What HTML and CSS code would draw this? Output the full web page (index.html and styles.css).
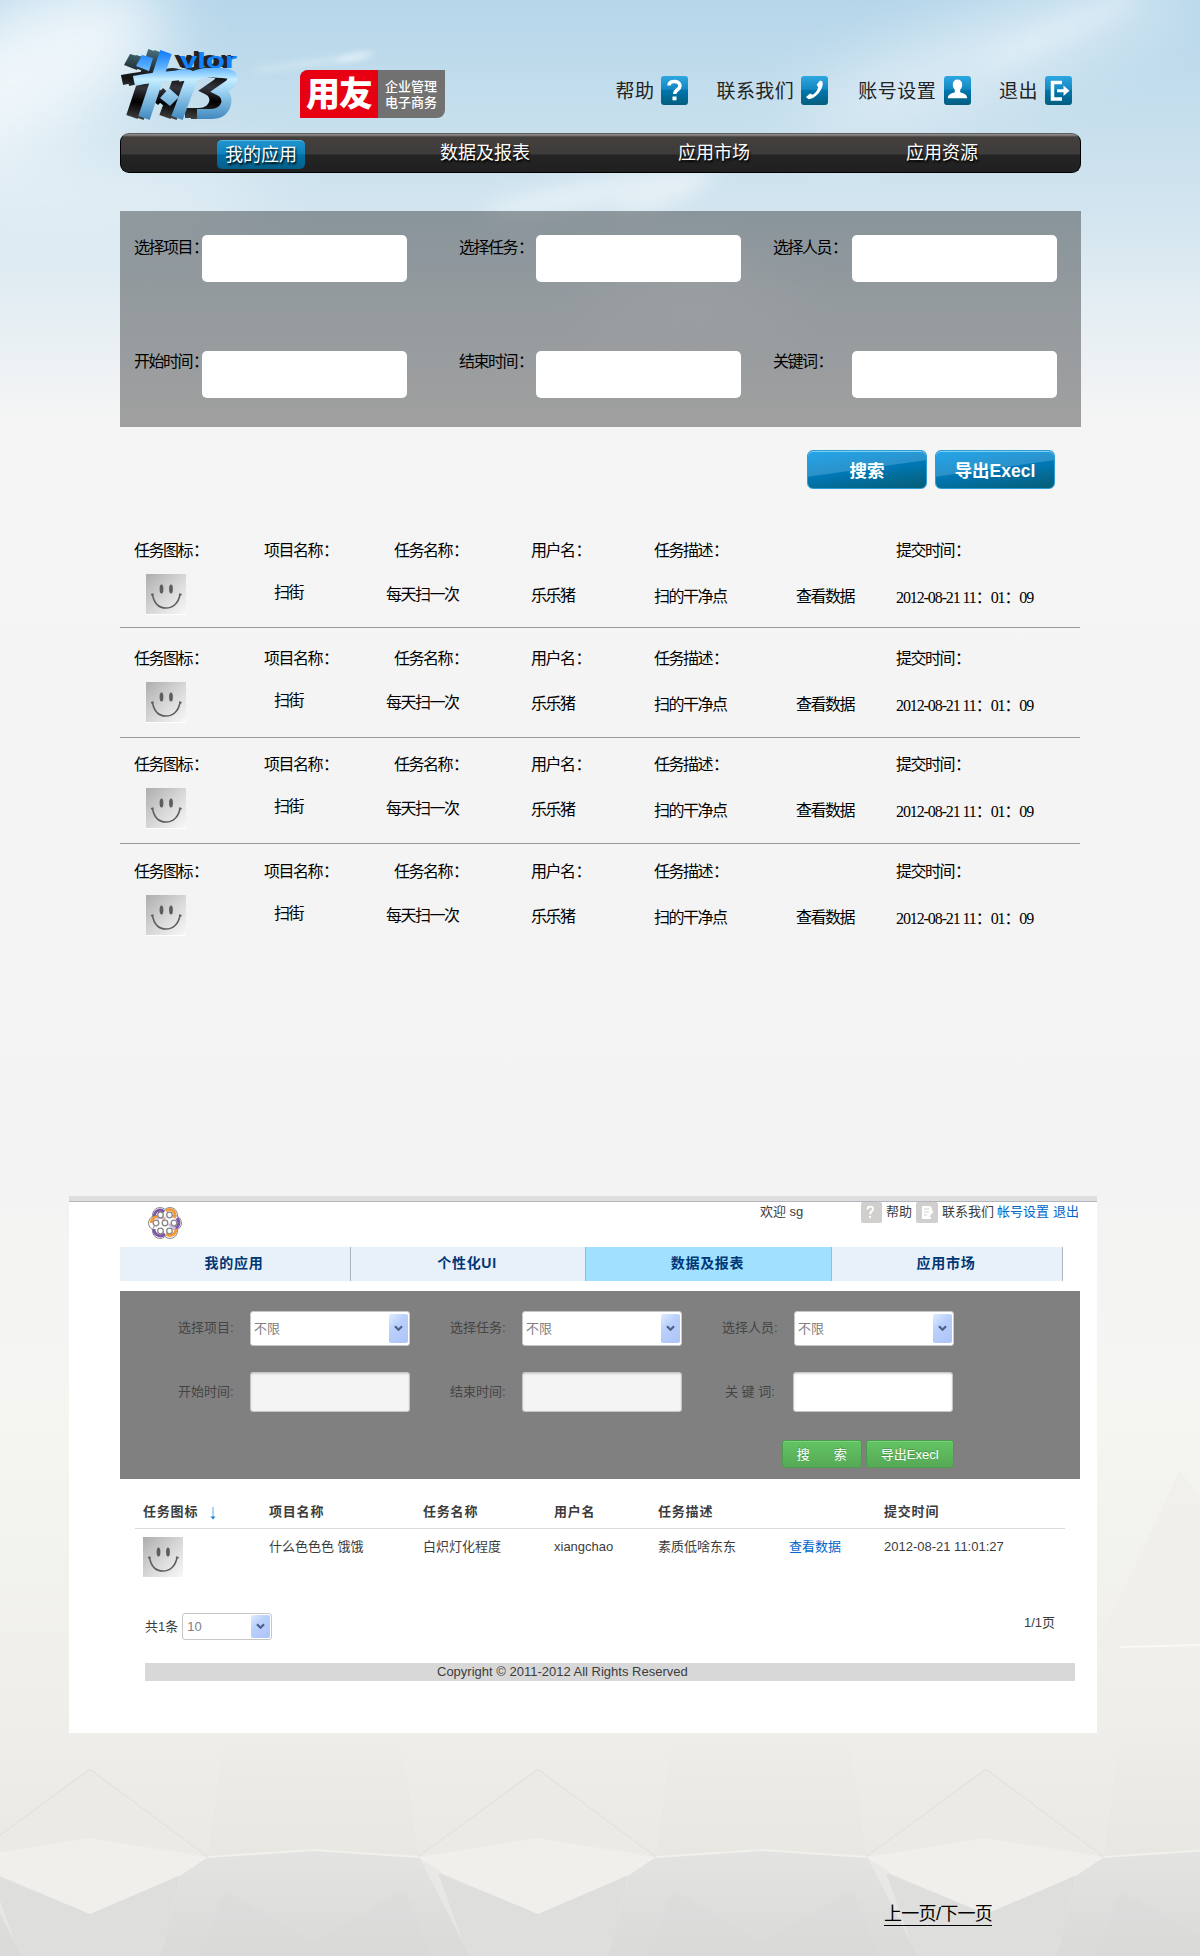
FILE: index.html
```html
<!DOCTYPE html>
<html lang="zh-CN">
<head>
<meta charset="utf-8">
<title>数据及报表</title>
<link rel="stylesheet" href="styles.css">
</head>
<body>
<svg width="0" height="0" class="defs" aria-hidden="true">
  <defs>
    <linearGradient id="faceBg" x1="0" y1="0" x2="1" y2="1"><stop offset="0" stop-color="#adadad"/><stop offset=".5" stop-color="#d6d6d6"/><stop offset="1" stop-color="#f8f8f8"/></linearGradient>
    <linearGradient id="icoBg" x1="0" y1="0" x2="0" y2="1"><stop offset="0" stop-color="#2ea7e0"/><stop offset=".45" stop-color="#1488c2"/><stop offset=".5" stop-color="#0075ae"/><stop offset="1" stop-color="#045d7e"/></linearGradient>
    <linearGradient id="mark" gradientUnits="userSpaceOnUse" x1="0" y1="0" x2="0" y2="70"><stop offset="0" stop-color="#0b78ff"/><stop offset=".25" stop-color="#5eb2ff"/><stop offset=".42" stop-color="#c5edff"/><stop offset=".6" stop-color="#9ad0f0"/><stop offset="1" stop-color="#3f86bd"/></linearGradient>
    <linearGradient id="markSide" gradientUnits="userSpaceOnUse" x1="0" y1="0" x2="0" y2="70"><stop offset="0" stop-color="#48717f"/><stop offset=".4" stop-color="#111"/><stop offset=".55" stop-color="#34343c"/><stop offset=".75" stop-color="#000"/><stop offset="1" stop-color="#444"/></linearGradient>
    <symbol id="face" viewBox="0 0 40 41">
      <rect width="40" height="41" fill="#fff"/><rect width="40" height="40" fill="url(#faceBg)"/>
      <ellipse cx="15.5" cy="15" rx="1.9" ry="4.5" fill="#5d5d5d"/><ellipse cx="25" cy="15" rx="1.9" ry="4.5" fill="#5d5d5d"/>
      <path d="M6.5 20.5C8 29 13 34 20 34S32.500 29 34 20.500M5 20.800l2.600-.8M33 20l2.600.8" fill="none" stroke="#5d5d5d" stroke-width="1.500"/>
    </symbol>
    <symbol id="tile" viewBox="0 0 27 29"><rect width="27" height="29" rx="3" fill="url(#icoBg)"/></symbol>
    <g id="markShape">
      <path d="M22 5 33 8 29 21 16 16Z" stroke="none"/>
      <path d="M46 2 24 68" stroke-width="12" fill="none"/>
      <path d="M14 31 C32 27 50 26 62 25" stroke-width="10" fill="none"/>
      <path d="M58 26Q74 22 70 33L57 68" stroke-width="12" fill="none"/>
      <path d="M72 27Q84 21 102 23Q118 24 110 34L100 41Q108 45 106 54Q103 64 91 64L77 64" stroke-width="10" fill="none"/>
      <path d="M49 38 59 47 50 56 40 48Z" stroke="none"/>
    </g>
  </defs>
</svg>

<svg class="scene" viewBox="0 0 1200 1956" width="1200" height="1956" aria-hidden="true">
  <defs>
    <linearGradient id="sky" x1="0" y1="0" x2="0" y2="1"><stop offset="0" stop-color="#b5d6ea"/><stop offset=".06" stop-color="#c6dfed"/><stop offset=".11" stop-color="#d3e5ef"/><stop offset=".16" stop-color="#e5eef3"/><stop offset=".215" stop-color="#f5f5f5"/><stop offset=".6" stop-color="#f3f3f3"/><stop offset=".72" stop-color="#f5f5f2"/><stop offset=".88" stop-color="#efeeea"/><stop offset="1" stop-color="#e6e5e1"/></linearGradient>
    <linearGradient id="dark" x1="0" y1="0" x2="0" y2="1"><stop offset="0" stop-color="#e3e4e1"/><stop offset="1" stop-color="#dadad9"/></linearGradient>
    <linearGradient id="tallFace" x1="0" y1="0" x2="0" y2="1"><stop offset="0" stop-color="#e9e8e4" stop-opacity="0"/><stop offset="1" stop-color="#e8e7e2"/></linearGradient>
    <filter id="b40" x="-50%" y="-150%" width="200%" height="400%"><feGaussianBlur stdDeviation="34"/></filter>
    <filter id="b14" x="-50%" y="-200%" width="200%" height="500%"><feGaussianBlur stdDeviation="10"/></filter>
    <filter id="b4" x="-50%" y="-300%" width="200%" height="700%"><feGaussianBlur stdDeviation="3"/></filter>
    <g id="facets">
      <path d="M208 1857 224 1735H400L419 1857 313 1851Z" fill="url(#tallFace)"/>
      <path d="M90 1769 208 1857 90 1838-30 1857Z" fill="#ebeae6"/>
      <path d="M208 1857 313 1850 419 1857 470 1956H160L181 1875Z" fill="url(#dark)"/>
      <path d="M90 1914 181 1873 160 1956H20L-10 1873Z" fill="#dededc"/>
      <path d="M-30 1857 90 1838 208 1857 181 1875 90 1914-2 1875Z" fill="#f0efeb"/>
      <path d="M225 1890 313 1942 405 1890 430 1956H200Z" fill="#d8d8d7" opacity=".25"/>
      <path d="M-30 1857 90 1769 208 1857" fill="none" stroke="#dfded9"/>
      <path d="M208 1857 313 1850 419 1857" fill="none" stroke="#f1f0ed" stroke-width="2"/>
    </g>
  </defs>
  <rect width="1200" height="1956" fill="url(#sky)"/>
  <g fill="#fff">
    <ellipse cx="30" cy="70" rx="150" ry="70" opacity=".75" filter="url(#b40)" transform="rotate(-28 30 70)"/>
    <ellipse cx="60" cy="190" rx="210" ry="40" opacity=".4" filter="url(#b40)"/>
    <ellipse cx="1000" cy="50" rx="210" ry="28" opacity=".6" filter="url(#b40)" transform="rotate(-20 1000 50)"/>
    <ellipse cx="1060" cy="30" rx="90" ry="12" opacity=".25" filter="url(#b14)" transform="rotate(-24 1060 30)"/>
    <ellipse cx="600" cy="192" rx="120" ry="13" opacity=".45" filter="url(#b14)" transform="rotate(-10 600 192)"/>
    <ellipse cx="660" cy="197" rx="50" ry="8" opacity=".45" filter="url(#b14)" transform="rotate(-20 660 197)"/>
    <ellipse cx="310" cy="63" rx="60" ry="2" opacity=".45" filter="url(#b4)" transform="rotate(-8 310 63)"/>
    <ellipse cx="355" cy="57" rx="20" ry="3" opacity=".5" filter="url(#b4)" transform="rotate(-12 355 57)"/>
    <ellipse cx="690" cy="300" rx="100" ry="30" opacity=".5" filter="url(#b40)"/>
  </g>
  <path d="M1097 1647 1180 1470 1200 1500V1646Z" fill="#efeeea" opacity=".7"/>
  <path d="M1120 1647 1200 1645" stroke="#f8f8f5" stroke-width="2"/>
  <use href="#facets" x="-448"/><use href="#facets" x="0"/><use href="#facets" x="448"/><use href="#facets" x="896"/>
</svg>

<div class="page">
  <header class="top">
    <svg class="brand" width="119" height="72" viewBox="0 0 119 72">
      <g transform="translate(-12 -1)" fill="url(#markSide)" stroke="url(#markSide)"><use href="#markShape"/></g>
      <g transform="translate(-6 0)" fill="url(#markSide)" stroke="url(#markSide)"><use href="#markShape"/></g>
      <g fill="url(#mark)" stroke="url(#mark)"><use href="#markShape"/></g>
      <text x="60" y="18" textLength="57" lengthAdjust="spacingAndGlyphs" class="brand-word">vlor</text>
    </svg>
    <div class="partner"><b>用友</b><span>企业管理<br>电子商务</span></div>
    <nav class="tools">
      <a>帮助<svg width="27" height="29" viewBox="0 0 27 29"><use href="#tile"/><path d="M8 9.500C8 6.500 10.500 5.500 13.500 5.500c3 0 5.500 1.500 5.500 4.300 0 4-5.300 4-5.300 8.200" fill="none" stroke="#fff" stroke-width="3.600"/><rect x="11.500" y="20.500" width="4" height="3.800" fill="#fff"/></svg></a>
      <a>联系我们<svg width="27" height="29" viewBox="0 0 27 29"><use href="#tile"/><path d="M19 4.500l2.500 1c1 3-.5 7-3 10.500-3 4-7 7-11 7.300l-2.500-2.300 4-3.500 2.700 1.200c3-1.800 4.700-4.500 5.500-7.500l-1.500-2.500z" fill="#fff"/></svg></a>
      <a class="acct">账号设置<svg width="27" height="29" viewBox="0 0 27 29"><use href="#tile"/><path d="M13.500 3.500c3 0 4.700 2 4.700 5 0 2.500-.8 4-2 5.300v2.500c3 1 7 2 7 6H3.800c0-4 4-5 7-6v-2.500c-1.200-1.300-2-2.800-2-5.300 0-3 1.700-5 4.700-5z" fill="#fff"/></svg></a>
      <a>退出<svg width="27" height="29" viewBox="0 0 27 29"><use href="#tile"/><path d="M17 6.500H7.500v16.500H17" fill="none" stroke="#fff" stroke-width="3.500"/><path d="M12 13.200h6.500V9.500l6 5.200-6 5.200v-3.700H12z" fill="#fff"/></svg></a>
    </nav>
  </header>

  <nav class="mainnav">
    <a class="on">我的应用</a><a>数据及报表</a><a>应用市场</a><a>应用资源</a>
  </nav>

  <section class="filter">
    <label>选择项目<span class="colon">：</span></label><i></i><label>选择任务<span class="colon">：</span></label><i></i><label>选择人员<span class="colon">：</span></label><i></i>
    <label>开始时间<span class="colon">：</span></label><i></i><label>结束时间<span class="colon">：</span></label><i></i><label>关键词<span class="colon">：</span></label><i></i>
  </section>

  <div class="actions"><button class="blue">搜索</button><button class="blue">导出Execl</button></div>

  <section class="records">
    <article class="record">
      <span>任务图标<span class="colon">：</span></span><span>项目名称<span class="colon">：</span></span><span>任务名称<span class="colon">：</span></span><span>用户名<span class="colon">：</span></span><span>任务描述<span class="colon">：</span></span><span></span><span>提交时间<span class="colon">：</span></span>
      <svg class="face" width="40" height="41"><use href="#face"/></svg><span class="v1">扫街</span><span class="v2">每天扫一次</span><span class="v3">乐乐猪</span><span class="v4">扫的干净点</span><span class="v4">查看数据</span><span class="date">2012-08-21 11：01：09</span>
    </article>
    <article class="record">
      <span>任务图标<span class="colon">：</span></span><span>项目名称<span class="colon">：</span></span><span>任务名称<span class="colon">：</span></span><span>用户名<span class="colon">：</span></span><span>任务描述<span class="colon">：</span></span><span></span><span>提交时间<span class="colon">：</span></span>
      <svg class="face" width="40" height="41"><use href="#face"/></svg><span class="v1">扫街</span><span class="v2">每天扫一次</span><span class="v3">乐乐猪</span><span class="v4">扫的干净点</span><span class="v4">查看数据</span><span class="date">2012-08-21 11：01：09</span>
    </article>
    <article class="record">
      <span>任务图标<span class="colon">：</span></span><span>项目名称<span class="colon">：</span></span><span>任务名称<span class="colon">：</span></span><span>用户名<span class="colon">：</span></span><span>任务描述<span class="colon">：</span></span><span></span><span>提交时间<span class="colon">：</span></span>
      <svg class="face" width="40" height="41"><use href="#face"/></svg><span class="v1">扫街</span><span class="v2">每天扫一次</span><span class="v3">乐乐猪</span><span class="v4">扫的干净点</span><span class="v4">查看数据</span><span class="date">2012-08-21 11：01：09</span>
    </article>
    <article class="record">
      <span>任务图标<span class="colon">：</span></span><span>项目名称<span class="colon">：</span></span><span>任务名称<span class="colon">：</span></span><span>用户名<span class="colon">：</span></span><span>任务描述<span class="colon">：</span></span><span></span><span>提交时间<span class="colon">：</span></span>
      <svg class="face" width="40" height="41"><use href="#face"/></svg><span class="v1">扫街</span><span class="v2">每天扫一次</span><span class="v3">乐乐猪</span><span class="v4">扫的干净点</span><span class="v4">查看数据</span><span class="date">2012-08-21 11：01：09</span>
    </article>
  </section>

  <section class="classic">
    <div class="c-head">
      <svg class="knot" width="34" height="32" viewBox="0 0 34 32">
        <g fill="#fff" stroke="#888" stroke-width="1"><circle cx="12" cy="8" r="7.500"/><circle cx="22" cy="8" r="7.500"/><circle cx="8" cy="16" r="7.500"/><circle cx="26" cy="16" r="7.500"/><circle cx="12" cy="24" r="7.500"/><circle cx="22" cy="24" r="7.500"/></g>
        <circle cx="17" cy="16" r="9" fill="#fff"/>
        <g fill="none" stroke-width="3"><path d="M6.500 10C6 4 12 1 16 5M29 11c4 5 1 11-4 10M6 22c0 6 6 9 11 5" stroke="#7d55ab"/><path d="M18 4c5-4 11 1 8 7M17 12C11 8 4 9 3 16M28 22c0 6-6 8-10 5" stroke="#f59a35"/><path d="M17 12c-3-3-6-2-8 0M21 17c3 3 5 4 6 5" stroke="#cdbce2"/></g>
        <g fill="#fff" stroke="#888" stroke-width="1.300"><circle cx="12.500" cy="8" r="2.800"/><circle cx="21.500" cy="8" r="2.800"/><circle cx="8" cy="16" r="2.800"/><circle cx="17" cy="16" r="2.800"/><circle cx="26" cy="16" r="2.800"/><circle cx="12.500" cy="24" r="2.800"/><circle cx="21.500" cy="24" r="2.800"/></g>
      </svg>
      <div class="c-tools">
        <span class="hello">欢迎 sg</span>
        <svg class="g1" width="21" height="21" viewBox="0 0 21 21"><rect width="21" height="21" rx="2" fill="#d0cfcd"/><path d="M6.500 7.500c0-4 5.500-3.500 5.500-.5 0 2.500-3 2.500-3 5.500M9 14v2" fill="none" stroke="#fff" stroke-width="1.800"/></svg>
        <span class="t1">帮助</span>
        <svg class="g2" width="22" height="21" viewBox="0 0 22 21"><rect width="22" height="21" rx="2" fill="#d0cfcd"/><path d="M6 4h8l2 2v4l-4 4 3 1v2H6z" fill="#fff"/><path d="M8 7h5M8 10h5M8 13h3" stroke="#d0cfcd"/><path d="M11 12l2 2 4-5" fill="none" stroke="#fff" stroke-width="1.500"/></svg>
        <span class="t2">联系我们</span><a class="t3">帐号设置</a><a>退出</a>
      </div>
    </div>
    <nav class="c-nav"><a>我的应用</a><a>个性化UI</a><a class="on">数据及报表</a><a>应用市场</a></nav>
    <div class="c-filter">
      <label>选择项目:</label><div class="sel"><span>不限</span><em><svg width="9" height="7" viewBox="0 0 9 7"><path d="M1 1.200 4.500 4.700 8 1.200" fill="none" stroke="#4d6185" stroke-width="2.200"/></svg></em></div>
      <label>选择任务:</label><div class="sel"><span>不限</span><em><svg width="9" height="7" viewBox="0 0 9 7"><path d="M1 1.200 4.500 4.700 8 1.200" fill="none" stroke="#4d6185" stroke-width="2.200"/></svg></em></div>
      <label>选择人员:</label><div class="sel"><span>不限</span><em><svg width="9" height="7" viewBox="0 0 9 7"><path d="M1 1.200 4.500 4.700 8 1.200" fill="none" stroke="#4d6185" stroke-width="2.200"/></svg></em></div>
      <label>开始时间:</label><div class="box off"></div>
      <label>结束时间:</label><div class="box off"></div>
      <label class="kw">关 键 词:</label><div class="box kwbox"></div>
      <div class="c-actions"><button class="green wide">搜<span>索</span></button><button class="green">导出Execl</button></div>
    </div>
    <div class="c-table">
      <div class="c-row head"><span>任务图标<svg class="sort" width="6" height="13" viewBox="0 0 6 13"><path d="M3 0v10.500" stroke="#5aa7ee" stroke-width="1"/><path d="M.5 9.500 3 12.500 5.500 9.500Z" fill="#1f80e0"/></svg></span><span>项目名称</span><span>任务名称</span><span>用户名</span><span>任务描述</span><span></span><span>提交时间</span></div>
      <div class="c-row"><svg class="c-face" width="40" height="40" viewBox="0 0 40 40"><use href="#face" width="40" height="41"/></svg><span>什么色色色 饿饿</span><span>白炽灯化程度</span><span>xiangchao</span><span>素质低啥东东</span><a>查看数据</a><span>2012-08-21 11:01:27</span></div>
    </div>
    <div class="c-pager">
      <span>共1条</span><div class="sel small"><span>10</span><em><svg width="9" height="7" viewBox="0 0 9 7"><path d="M1 1.200 4.500 4.700 8 1.200" fill="none" stroke="#4d6185" stroke-width="2.200"/></svg></em></div><span class="count">1/1页</span>
    </div>
    <footer class="c-foot">Copyright © 2011-2012 All Rights Reserved</footer>
  </section>

  <div class="pages"><a>上一页/下一页</a></div>
</div>
</body>
</html>
```
FILE: styles.css
```css
* { box-sizing: border-box; }
body {
  margin: 0;
  width: 1200px;
  height: 1956px;
  position: relative;
  overflow: hidden;
  background: #f4f4f4;
  font-family: "Liberation Sans", "Noto Sans CJK SC", sans-serif;
  color: #000;
}
.defs { position: absolute; }
.scene { position: absolute; left: 0; top: 0; }
.page { position: relative; display: flow-root; }
svg { display: block; flex: none; }
button { border: 0; padding: 0; font-family: inherit; }

/* header */
.top { display: flex; height: 133px; padding: 50px 128px 0 120px; align-items: flex-start; }
.brand { overflow: visible; }
.brand-word { font: bold 22px "Liberation Sans", sans-serif; fill: #1383fb; text-shadow: -1px 0 #222, -2px 0 #222, -3px 0 #222, -4px -1px #222; }
.partner { display: flex; width: 145px; height: 48px; margin: 20px 0 0 61px; border-radius: 8px 0 8px 0; overflow: hidden; color: #fff; background: #727171; }
.partner b { width: 78px; background: #e60012; font-size: 34px; font-weight: 900; line-height: 48px; text-align: center; letter-spacing: -1px; }
.partner span { padding: 9px 0 0 7px; font-size: 13px; font-weight: 500; line-height: 16px; white-space: nowrap; }
.tools { display: flex; margin: 26px 0 0 auto; gap: 28px; font-size: 19px; line-height: 31px; color: #222; letter-spacing: .45px; white-space: nowrap; }
.tools a { display: flex; gap: 7px; }
.tools .acct { margin-left: 2px; gap: 8px; }

/* main navigation */
.mainnav {
  display: grid;
  grid-template-columns: 96px 88px 135px 91px 147px 72px 156px 72px;
  width: 961px; height: 40px; margin-left: 120px; padding-top: 6px;
  border: 1px solid #000; border-top-color: #5d5d5d; border-radius: 9px;
  background: linear-gradient(#8b8888 0 1px, #433f3d 3px, #3e3c3b 20px, #242424 21px, #202020);
  color: #fff; font-size: 18px; line-height: 26px; text-shadow: 1px 2px 2px #000; white-space: nowrap;
}
.mainnav a { grid-row: 1; }
.mainnav a:nth-child(1) { grid-column: 2; }
.mainnav a:nth-child(2) { grid-column: 4; }
.mainnav a:nth-child(3) { grid-column: 6; }
.mainnav a:nth-child(4) { grid-column: 8; }
.mainnav .on { height: 29px; line-height: 29px; text-align: center; border-radius: 5px; border-top: 1px solid #54b4e2; background: linear-gradient(#2094cf, #0f82bd 45%, #0070a8 50%, #055f88); }

/* search panel */
.filter {
  display: grid;
  grid-template-columns: 68px 205px 52px 77px 205px 32px 79px 205px;
  grid-template-rows: 47px 47px; row-gap: 69px;
  width: 961px; height: 216px; margin: 38px 0 0 120px; padding: 24px 0 0 14px;
  background: rgba(0,0,0,.35);
}
.filter label { font-size: 16px; letter-spacing: -1.5px; line-height: 26px; white-space: nowrap; }
.filter label:nth-of-type(n+4) { margin-top: -2px; }
.filter i { background: #fff; border-radius: 5px; }
.filter > :nth-child(6n+3) { grid-column: 4; }
.filter > :nth-child(6n+5) { grid-column: 7; }
.colon { margin-left: 1px; }

.actions { display: flex; gap: 8px; margin: 23px 0 0 807px; }
.blue {
  width: 120px; height: 39px; padding-bottom: 1px; border-radius: 6px; border: 1px solid #2b9ed6;
  background: linear-gradient(172deg, #23a6ea 0%, #2b91c9 47%, #0079b8 49%, #046a94 75%, #055d76 100%);
  box-shadow: inset 0 1px 0 #7fd0f5; color: #fff; font-size: 17.5px; font-weight: bold;
}

/* record list */
.records { margin: 50px 0 0 120px; width: 960px; height: 402px; }
.record {
  display: grid; grid-template-columns: 130px 130px 137px 123px 142px 100px 150px; grid-template-rows: 35px 41px;
  height: 110px; padding: 0 0 0 14px; align-items: start;
  border-bottom: 1px solid #9b9b9b; font-size: 16px; letter-spacing: -1.5px; line-height: 24px; white-space: nowrap;
}
.record:nth-child(1) { height: 89px; }
.record:nth-child(2) { padding-top: 19px; height: 110px; }
.record:nth-child(3) { padding-top: 15px; height: 106px; }
.record:nth-child(4) { padding-top: 16px; border: 0; }
.record .face { margin-left: 12px; }
.record .v1 { margin: 7px 0 0 10px; }
.record .v2 { margin: 9px 0 0 -8px; }
.record .v3 { margin: 10px 0 0 0; }
.record .v4 { margin-top: 11px; }
.record .date { margin-top: 12px; letter-spacing: -1.1px; font-family: "Liberation Serif", "Noto Sans CJK SC", serif; }

/* embedded classic view */
.classic { margin: 255px 0 0 69px; width: 1028px; height: 537px; padding-left: 51px; background: #fff; border-top: 5px solid #dedede; color: #3c3c3c; font-size: 13px; line-height: 20px; white-space: nowrap; }
.c-head { display: flex; height: 46px; margin-left: -51px; padding-left: 51px; border-top: 1px solid #b4b5bd; }
.knot { margin: 5px 0 0 28px; }
.c-tools { display: flex; margin-left: 578px; }
.hello { width: 101px; }
.g1 { margin-right: 4px; }
.t1 { width: 30px; }
.g2 { margin-right: 4px; }
.t2 { width: 55px; }
.t3 { width: 56px; }
.c-tools a, .c-row a { color: #0066cc; }
.c-nav { display: grid; grid-template-columns: 231px 235px 246px 231px; width: 943px; height: 34px; background: #e8f1f9; font-size: 14px; font-weight: bold; line-height: 33px; text-align: center; color: #003776; letter-spacing: .7px; }
.c-nav a { padding-right: 2px; border-right: 1px solid #acb5c4; }
.c-nav .on { background: #a1e1ff; }
.c-filter { display: grid; grid-template-columns: 72px 200px 72px 200px 72px 160px; grid-template-rows: 35px 40px 29px; row-gap: 26px; width: 960px; height: 188px; margin-top: 10px; padding: 20px 0 0 58px; background: #808080; }
.c-filter label { line-height: 34px; color: #444; }
.c-filter label:nth-of-type(n+4) { line-height: 40px; }
.c-filter .kw { padding-left: 3px; }
.sel { display: flex; width: 160px; height: 35px; padding: 2px 1px; border: 1px solid #c6c6c6; border-radius: 3px; background: #fff; color: #808080; }
.sel > span { flex: 1; padding-left: 2px; line-height: 29px; }
.sel em { display: flex; align-items: center; justify-content: center; width: 19px; border-radius: 2px; background: linear-gradient(135deg, #e0ecff, #b9cffc 40%, #adc4fa); }
.box { width: 160px; height: 40px; border: 1px solid #c6c6c6; border-radius: 3px; background: #fff; box-shadow: inset 0 1px 2px rgba(0,0,0,.15); }
.off { background: #f4f4f4; }
.kwbox { margin-left: -1px; }
.c-actions { grid-column: 5 / 7; grid-row: 3; display: flex; gap: 4px; margin: 2px 0 0 60px; }
.green { width: 89px; height: 28px; padding-bottom: 1px; border-radius: 3px; border: 1px solid #4b9d4b; background: linear-gradient(#62c462, #57a957); box-shadow: inset 0 1px 0 #7ccf7c; color: #fff; font-size: 13px; text-shadow: 0 -1px 0 rgba(0,0,0,.2); }
.wide { width: 80px; }
.wide span { margin-left: 24px; }
.c-table { width: 930px; margin: 21px 0 0 15px; }
.c-row { display: grid; grid-template-columns: 126px 154px 131px 104px 131px 95px 150px; padding: 8px 0 0 8px; height: 50px; }
.c-row.head { height: 29px; padding-top: 0; border-bottom: 1px solid #dbdbdb; font-weight: bold; letter-spacing: .8px; line-height: 23px; }
.c-row.head span:first-child { display: flex; gap: 12px; }
.sort { margin-top: 7px; }
.c-face { width: 40px; height: 40px; }
.c-pager { display: flex; width: 930px; margin: 34px 0 0 25px; line-height: 27px; }
.small { width: 90px; height: 27px; margin-left: 4px; padding: 1px; }
.small > span { padding-left: 3px; line-height: 23px; }
.count { margin-left: auto; padding-right: 20px; line-height: 19px; }
.c-foot { width: 930px; height: 18px; margin: 23px 0 0 25px; padding-left: 292px; background: #d8d8d8; line-height: 18px; }

.pages { margin: 170px 0 0 884px; }
.pages a { display: inline-block; border-bottom: 1px solid #000; font-size: 18px; line-height: 22px; letter-spacing: -.7px; white-space: nowrap; }
```
